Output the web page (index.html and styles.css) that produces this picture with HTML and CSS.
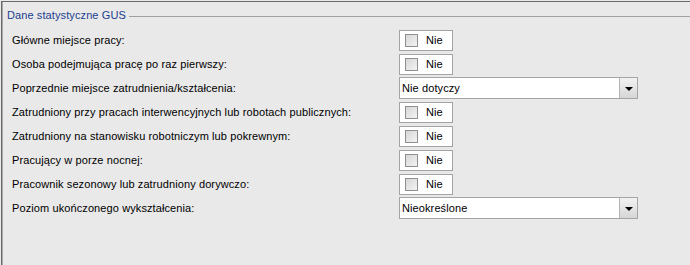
FILE: index.html
```html
<!DOCTYPE html>
<html lang="pl">
<head>
    <meta charset="UTF-8">
    <title>Dane statystyczne GUS</title>
    <link rel="stylesheet" href="styles.css">
</head>
<body>
    <div class="panel">
        <div class="group">
            <div class="group-header">
                <span class="legend">Dane statystyczne GUS</span>
                <span class="legend-line"></span>
            </div>

            <div class="fields">
                <div class="row">
                    <label>Główne miejsce pracy:</label>
                    <div class="check"><span class="box"></span>Nie</div>
                </div>
                <div class="row">
                    <label>Osoba podejmująca pracę po raz pierwszy:</label>
                    <div class="check"><span class="box"></span>Nie</div>
                </div>
                <div class="row">
                    <label>Poprzednie miejsce zatrudnienia/kształcenia:</label>
                    <div class="combo"><span class="combo-text">Nie dotyczy</span><span class="combo-btn"><span class="arrow"></span></span></div>
                </div>
                <div class="row">
                    <label>Zatrudniony przy pracach interwencyjnych lub robotach publicznych:</label>
                    <div class="check"><span class="box"></span>Nie</div>
                </div>
                <div class="row">
                    <label>Zatrudniony na stanowisku robotniczym lub pokrewnym:</label>
                    <div class="check"><span class="box"></span>Nie</div>
                </div>
                <div class="row">
                    <label>Pracujący w porze nocnej:</label>
                    <div class="check"><span class="box"></span>Nie</div>
                </div>
                <div class="row">
                    <label>Pracownik sezonowy lub zatrudniony dorywczo:</label>
                    <div class="check"><span class="box"></span>Nie</div>
                </div>
                <div class="row">
                    <label>Poziom ukończonego wykształcenia:</label>
                    <div class="combo"><span class="combo-text">Nieokreślone</span><span class="combo-btn"><span class="arrow"></span></span></div>
                </div>
            </div>
        </div>
    </div>
</body>
</html>
```

FILE: styles.css
```css
body {
    margin: 0;
    background: #e9e9e9;
    font-family: "Liberation Sans", Arial, sans-serif;
    font-size: 11px;
    letter-spacing: 0.1px;
    color: #000;
}

.panel {
    margin: 1px 0 0 1px;
    height: 263px;
    border-top: 1px solid #6a6a6a;
    border-left: 1px solid #6a6a6a;
}

.group {
    height: 100%;
    border-left: 1px solid #a8a8a8;
}

.group-header {
    display: flex;
    align-items: center;
    height: 26px;
    padding-left: 4px;
}

.legend {
    color: #1c3d8f;
    padding-right: 3px;
    line-height: 14px;
}

.legend-line {
    flex: 1;
    border-top: 1px solid #a0a0a0;
    margin-top: 3px;
}

.fields {
    padding-left: 9px;
}

.row {
    display: grid;
    grid-template-columns: 387px auto;
    align-items: center;
    height: 24px;
}

.row label {
    line-height: 14px;
}

/* pole z checkboxem */
.check {
    display: flex;
    align-items: center;
    box-sizing: border-box;
    width: 54px;
    height: 21px;
    background: #fff;
    border: 1px solid #a3a3a3;
    padding-left: 5px;
}

.box {
    box-sizing: border-box;
    width: 13px;
    height: 13px;
    border: 1px solid #8f8f8f;
    background: linear-gradient(135deg, #d6d6d6, #f4f4f4);
    margin-right: 8px;
}

/* lista rozwijana */
.combo {
    display: flex;
    box-sizing: border-box;
    width: 239px;
    height: 22px;
    background: #fff;
    border: 1px solid #a5a5a5;
}

.combo-text {
    flex: 1;
    padding-left: 2px;
    line-height: 20px;
}

.combo-btn {
    display: flex;
    align-items: center;
    justify-content: center;
    width: 17px;
    border-left: 1px solid #b4b4b4;
    background: linear-gradient(#f2f2f2, #d6d6d6);
}

.arrow {
    width: 0;
    height: 0;
    border-left: 4px solid transparent;
    border-right: 4px solid transparent;
    border-top: 4px solid #000;
    margin-top: 1px;
}
```
